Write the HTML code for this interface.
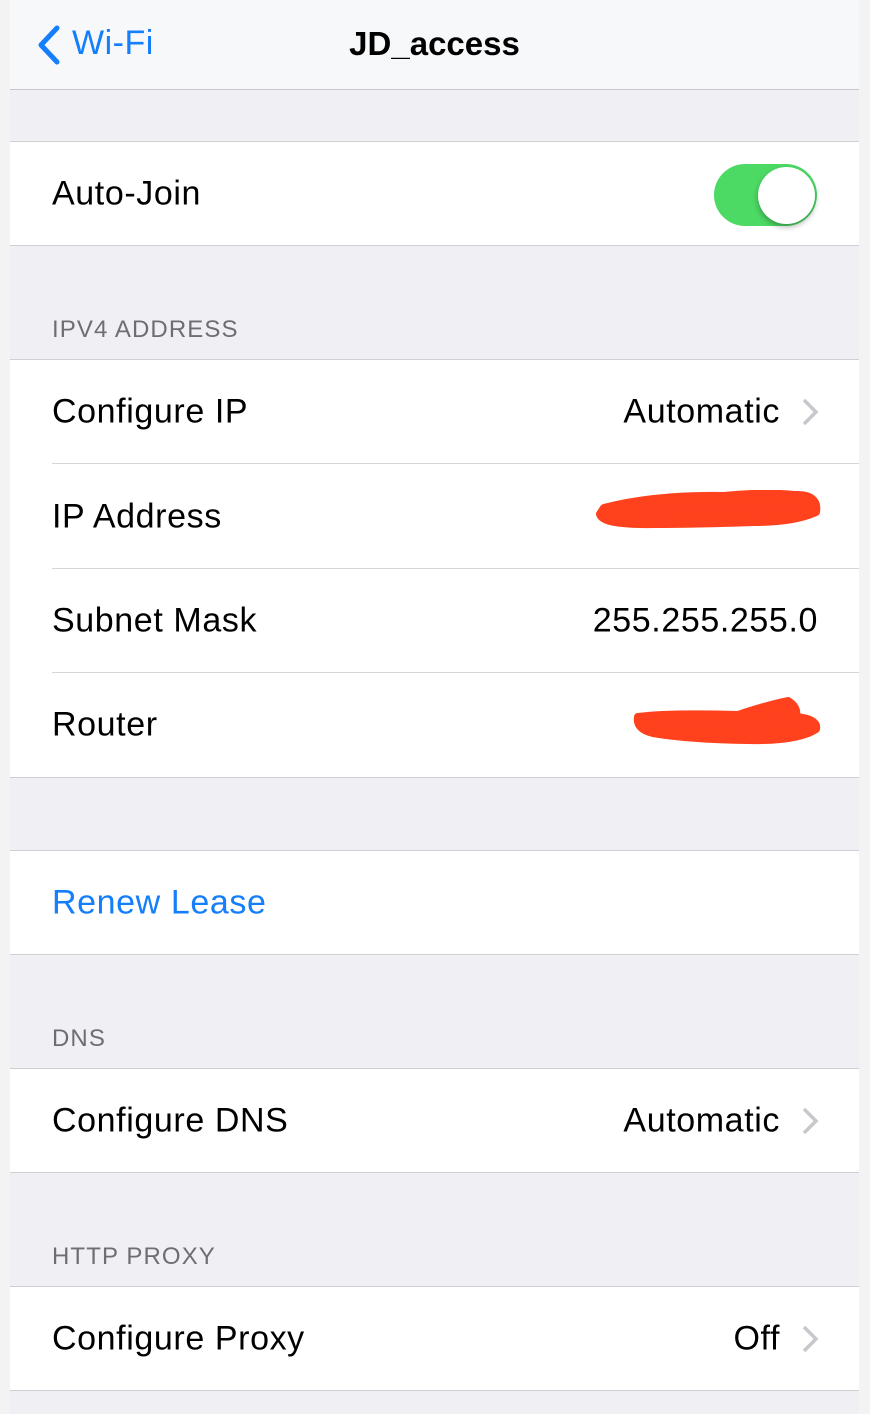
<!DOCTYPE html>
<html><head><meta charset="utf-8"><style>
*{margin:0;padding:0;box-sizing:border-box}
body{width:870px;height:1414px;background:#f3f3f4;font-family:"Liberation Sans",sans-serif;position:relative;overflow:hidden}
#main{position:absolute;left:10px;top:0;width:849px;height:1414px;background:#efeff4}
.nav{position:absolute;left:0;top:0;width:849px;height:90px;background:#f7f8fa;border-bottom:1px solid #c8c8cc}
.row{position:absolute;left:0;width:849px;background:#fff;font-size:34px;letter-spacing:0.6px;color:#000}
.row .l{position:absolute;left:42px;top:50%;transform:translateY(-50%)}
.row .r{position:absolute;right:41px;top:50%;transform:translateY(-50%)}
.row .rc{position:absolute;right:79px;top:50%;transform:translateY(-50%)}
.chev{position:absolute;right:40px;top:50%;transform:translateY(-50%)}
.bt{border-top:1px solid #d0d0d4}.bb{border-bottom:1px solid #d0d0d4}
.sep{position:absolute;left:42px;right:0;bottom:0;height:1px;background:#d6d6da}
.hdr{position:absolute;left:42px;font-size:24px;color:#6d6d72;letter-spacing:1.1px}
</style></head><body>
<div id="main">
<div class="nav">
<svg style="position:absolute;left:26px;top:24px" width="26" height="42"><path d="M21 4 L5 21 L21 38" stroke="#157efb" stroke-width="5" fill="none" stroke-linecap="round" stroke-linejoin="round"/></svg>
<div style="position:absolute;left:62px;top:24px;font-size:34px;letter-spacing:0.5px;color:#157efb">Wi-Fi</div>
<div style="position:absolute;left:0;width:849px;text-align:center;top:25px;font-size:33px;font-weight:bold">JD_access</div>
</div>
<div class="row bt bb" style="top:141px;height:105px"><span class="l">Auto-Join</span>
<div style="position:absolute;left:704px;top:22px;width:103px;height:62px;border-radius:31px;background:#4cd964"></div>
<div style="position:absolute;left:748px;top:25px;width:57px;height:57px;border-radius:50%;background:#fff;box-shadow:0 3px 6px rgba(0,0,0,.3)"></div>
</div>
<div class="hdr" style="top:316px">IPV4 ADDRESS</div>
<div class="row bt" style="top:359px;height:105px"><span class="l">Configure IP</span><span class="rc">Automatic</span><svg class="chev" width="18" height="30"><path d="M3 3 L15 15 L3 27" stroke="#c7c7cc" stroke-width="3.5" fill="none"/></svg><div class="sep"></div></div>
<div class="row" style="top:464px;height:105px"><span class="l">IP Address</span>
<svg style="position:absolute;left:584px;top:26px" width="240" height="45"><path d="M10 18 Q60 5 130 6 Q170 2 200 5 Q225 4 222 22 Q200 32 160 32 Q100 34 60 34 Q8 35 6 24 Z" fill="#ff421d" stroke="#ff421d" stroke-width="8" stroke-linejoin="round"/></svg>
<div class="sep"></div></div>
<div class="row" style="top:569px;height:104px"><span class="l">Subnet Mask</span><span class="r">255.255.255.0</span><div class="sep"></div></div>
<div class="row bb" style="top:673px;height:105px"><span class="l">Router</span>
<svg style="position:absolute;left:618px;top:22px" width="200" height="55"><path d="M10 22 Q40 18 110 20 Q140 10 160 6 Q170 12 168 22 Q190 24 188 34 Q170 46 120 45 Q60 44 25 38 Q8 34 10 22 Z" fill="#ff421d" stroke="#ff421d" stroke-width="8" stroke-linejoin="round"/></svg>
</div>
<div class="row bt bb" style="top:850px;height:105px"><span class="l" style="color:#157efb">Renew Lease</span></div>
<div class="hdr" style="top:1025px">DNS</div>
<div class="row bt bb" style="top:1068px;height:105px"><span class="l">Configure DNS</span><span class="rc">Automatic</span><svg class="chev" width="18" height="30"><path d="M3 3 L15 15 L3 27" stroke="#c7c7cc" stroke-width="3.5" fill="none"/></svg></div>
<div class="hdr" style="top:1243px">HTTP PROXY</div>
<div class="row bt bb" style="top:1286px;height:105px"><span class="l">Configure Proxy</span><span class="rc">Off</span><svg class="chev" width="18" height="30"><path d="M3 3 L15 15 L3 27" stroke="#c7c7cc" stroke-width="3.5" fill="none"/></svg></div>
</div>
</body></html>
